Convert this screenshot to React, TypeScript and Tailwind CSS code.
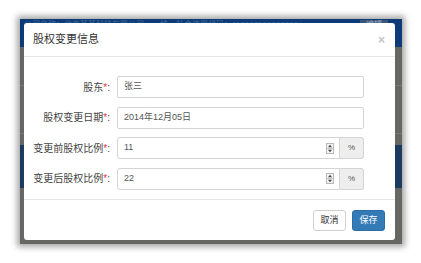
import React from 'react';

const font = { fontFamily: '"Liberation Sans", "Noto Sans CJK SC", sans-serif' };

function Spinner() {
  return (
    <svg width="8" height="11" viewBox="0 0 8 11" className="shrink-0">
      <rect x="0.5" y="0.5" width="7" height="10" fill="#f4f4f4" stroke="#b8b8b8" />
      <line x1="1" y1="5.5" x2="7" y2="5.5" stroke="#c8c8c8" />
      <path d="M4 1.8 L6 4.2 L2 4.2 Z" fill="#444" />
      <path d="M4 9.2 L6 6.8 L2 6.8 Z" fill="#444" />
    </svg>
  );
}

function Row({ label, value, pct }: { label: string; value: string; pct?: boolean }) {
  return (
    <div className="flex items-center">
      <label className="w-[93px] shrink-0 pr-[7px] text-right text-[10px] text-[#444]">
        {label}
        <span className="text-[#e33]">*</span>:
      </label>
      {pct ? (
        <div className="flex h-[22px] w-[247px]">
          <div className="flex flex-1 items-center justify-between rounded-l-[3px] border border-[#d4d4d4] pl-[6px] pr-[5px]">
            <span className="text-[9px] text-[#555]">{value}</span>
            <Spinner />
          </div>
          <div className="flex w-[24px] items-center justify-center rounded-r-[3px] border border-l-0 border-[#d4d4d4] bg-[#eeeeee] text-[8px] text-[#555]">
            %
          </div>
        </div>
      ) : (
        <div className="flex h-[22px] w-[247px] items-center rounded-[2px] border border-[#d4d4d4] pl-[6px] text-[9px] text-[#555]">
          {value}
        </div>
      )}
    </div>
  );
}

export default function App() {
  return (
    <div className="h-[263px] w-[421px] overflow-hidden bg-white pt-[19px] pl-[20px]" style={font}>
      <div className="relative h-[225px] w-[382px] bg-[#666662] shadow-[0_0_6px_3px_rgba(0,0,0,0.35)]">
        {/* page behind the modal */}
        <div className="flex h-[28px] items-start justify-between bg-[#0c3b78] px-[4px] pt-[1px] text-[8px] leading-[9px] text-[#45689a]">
          <span>公司名称：北京某某科技有限公司　　统一社会信用代码：110007100000010</span>
          <span className="mr-[10px] bg-[#3e5576] px-[6px] text-[#8ea2c0]">编辑</span>
        </div>
        <div className="h-[38px]" />
        <div className="h-px bg-[#7a7a76]" />
        <div className="h-[47px]" />
        <div className="h-px bg-[#7a7a76]" />
        <div className="h-[11px]" />
        <div className="h-[43px] bg-[#1b3b5e]" />

        {/* modal */}
        <div className="absolute left-[4px] top-[4px] flex h-[217px] w-[371px] flex-col rounded-[3px] bg-white">
          <div className="flex h-[34px] shrink-0 items-center justify-between border-b border-[#e5e5e5] pl-[9px] pr-[10px]">
            <span className="text-[11px] text-[#333]">股权变更信息</span>
            <span className="text-[12px] font-bold leading-none text-[#c4c4c4]">×</span>
          </div>
          <div className="flex flex-1 flex-col gap-[8.5px] pt-[19px]">
            <Row label="股东" value="张三" />
            <Row label="股权变更日期" value="2014年12月05日" />
            <Row label="变更前股权比例" value="11" pct />
            <Row label="变更后股权比例" value="22" pct />
          </div>
          <div className="flex h-[41px] shrink-0 justify-end gap-[6px] border-t border-[#e5e5e5] pr-[10px] pt-[10px]">
            <button className="h-[21px] w-[33px] rounded-[3px] border border-[#d0d0d0] bg-white text-[9px] text-[#333]">
              取消
            </button>
            <button className="h-[21px] w-[33px] rounded-[3px] border border-[#2e6da4] bg-[#337ab7] text-[9px] text-white">
              保存
            </button>
          </div>
        </div>
      </div>
    </div>
  );
}
